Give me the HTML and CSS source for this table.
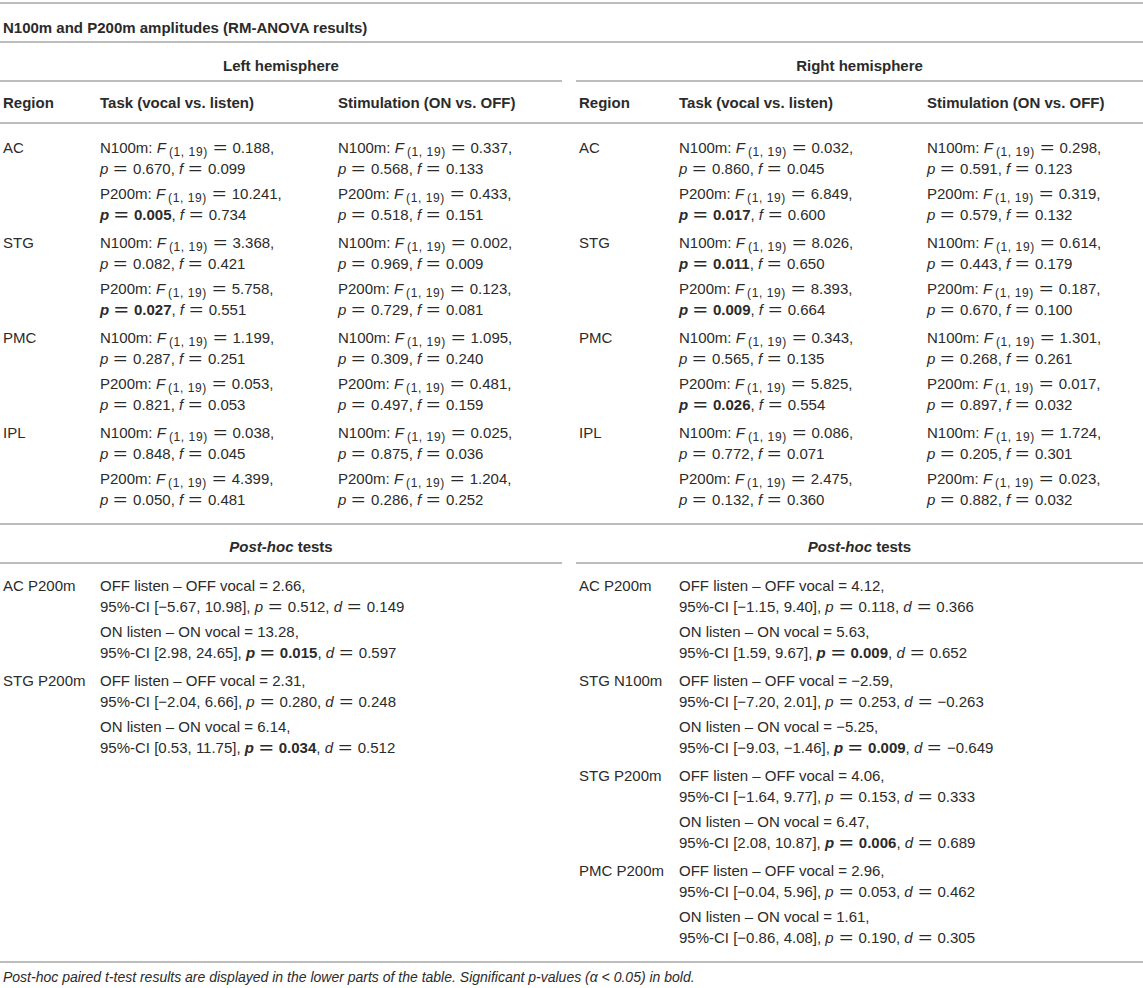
FILE: index.html
```html
<!DOCTYPE html>
<html lang="en">
<head>
    <meta charset="UTF-8">
    <meta name="viewport" content="width=device-width, initial-scale=1.0">
    <title>N100m and P200m amplitudes</title>
    <link rel="stylesheet" href="styles.css">
</head>
<body>
    <table class="results">
        <colgroup>
            <col class="c-region">
            <col class="c-task">
            <col class="c-stim">
            <col class="c-gap">
            <col class="c-region-r">
            <col class="c-task-r">
            <col class="c-stim-r">
        </colgroup>
        <thead>
            <tr class="title-row">
                <th colspan="7">N100m and P200m amplitudes (RM-ANOVA results)</th>
            </tr>
            <tr class="hemi-row">
                <th colspan="3">Left hemisphere</th>
                <th class="gap"></th>
                <th colspan="3">Right hemisphere</th>
            </tr>
            <tr class="col-row">
                <th>Region</th>
                <th>Task (vocal vs. listen)</th>
                <th>Stimulation (ON vs. OFF)</th>
                <th class="gap"></th>
                <th>Region</th>
                <th>Task (vocal vs. listen)</th>
                <th>Stimulation (ON vs. OFF)</th>
            </tr>
        </thead>
        <tbody class="anova">
            <tr>
                <td>AC</td>
                <td>
                    <div class="entry">N100m: <i>F</i><sub>(1, 19)</sub><span class="eq">=</span>0.188,<br><i>p</i><span class="eq">=</span>0.670, <i>f</i><span class="eq">=</span>0.099</div>
                    <div class="entry">P200m: <i>F</i><sub>(1, 19)</sub><span class="eq">=</span>10.241,<br><b><i>p</i><span class="eq">=</span>0.005</b>, <i>f</i><span class="eq">=</span>0.734</div>
                </td>
                <td>
                    <div class="entry">N100m: <i>F</i><sub>(1, 19)</sub><span class="eq">=</span>0.337,<br><i>p</i><span class="eq">=</span>0.568, <i>f</i><span class="eq">=</span>0.133</div>
                    <div class="entry">P200m: <i>F</i><sub>(1, 19)</sub><span class="eq">=</span>0.433,<br><i>p</i><span class="eq">=</span>0.518, <i>f</i><span class="eq">=</span>0.151</div>
                </td>
                <td class="gap"></td>
                <td>AC</td>
                <td>
                    <div class="entry">N100m: <i>F</i><sub>(1, 19)</sub><span class="eq">=</span>0.032,<br><i>p</i><span class="eq">=</span>0.860, <i>f</i><span class="eq">=</span>0.045</div>
                    <div class="entry">P200m: <i>F</i><sub>(1, 19)</sub><span class="eq">=</span>6.849,<br><b><i>p</i><span class="eq">=</span>0.017</b>, <i>f</i><span class="eq">=</span>0.600</div>
                </td>
                <td>
                    <div class="entry">N100m: <i>F</i><sub>(1, 19)</sub><span class="eq">=</span>0.298,<br><i>p</i><span class="eq">=</span>0.591, <i>f</i><span class="eq">=</span>0.123</div>
                    <div class="entry">P200m: <i>F</i><sub>(1, 19)</sub><span class="eq">=</span>0.319,<br><i>p</i><span class="eq">=</span>0.579, <i>f</i><span class="eq">=</span>0.132</div>
                </td>
            </tr>
            <tr>
                <td>STG</td>
                <td>
                    <div class="entry">N100m: <i>F</i><sub>(1, 19)</sub><span class="eq">=</span>3.368,<br><i>p</i><span class="eq">=</span>0.082, <i>f</i><span class="eq">=</span>0.421</div>
                    <div class="entry">P200m: <i>F</i><sub>(1, 19)</sub><span class="eq">=</span>5.758,<br><b><i>p</i><span class="eq">=</span>0.027</b>, <i>f</i><span class="eq">=</span>0.551</div>
                </td>
                <td>
                    <div class="entry">N100m: <i>F</i><sub>(1, 19)</sub><span class="eq">=</span>0.002,<br><i>p</i><span class="eq">=</span>0.969, <i>f</i><span class="eq">=</span>0.009</div>
                    <div class="entry">P200m: <i>F</i><sub>(1, 19)</sub><span class="eq">=</span>0.123,<br><i>p</i><span class="eq">=</span>0.729, <i>f</i><span class="eq">=</span>0.081</div>
                </td>
                <td class="gap"></td>
                <td>STG</td>
                <td>
                    <div class="entry">N100m: <i>F</i><sub>(1, 19)</sub><span class="eq">=</span>8.026,<br><b><i>p</i><span class="eq">=</span>0.011</b>, <i>f</i><span class="eq">=</span>0.650</div>
                    <div class="entry">P200m: <i>F</i><sub>(1, 19)</sub><span class="eq">=</span>8.393,<br><b><i>p</i><span class="eq">=</span>0.009</b>, <i>f</i><span class="eq">=</span>0.664</div>
                </td>
                <td>
                    <div class="entry">N100m: <i>F</i><sub>(1, 19)</sub><span class="eq">=</span>0.614,<br><i>p</i><span class="eq">=</span>0.443, <i>f</i><span class="eq">=</span>0.179</div>
                    <div class="entry">P200m: <i>F</i><sub>(1, 19)</sub><span class="eq">=</span>0.187,<br><i>p</i><span class="eq">=</span>0.670, <i>f</i><span class="eq">=</span>0.100</div>
                </td>
            </tr>
            <tr>
                <td>PMC</td>
                <td>
                    <div class="entry">N100m: <i>F</i><sub>(1, 19)</sub><span class="eq">=</span>1.199,<br><i>p</i><span class="eq">=</span>0.287, <i>f</i><span class="eq">=</span>0.251</div>
                    <div class="entry">P200m: <i>F</i><sub>(1, 19)</sub><span class="eq">=</span>0.053,<br><i>p</i><span class="eq">=</span>0.821, <i>f</i><span class="eq">=</span>0.053</div>
                </td>
                <td>
                    <div class="entry">N100m: <i>F</i><sub>(1, 19)</sub><span class="eq">=</span>1.095,<br><i>p</i><span class="eq">=</span>0.309, <i>f</i><span class="eq">=</span>0.240</div>
                    <div class="entry">P200m: <i>F</i><sub>(1, 19)</sub><span class="eq">=</span>0.481,<br><i>p</i><span class="eq">=</span>0.497, <i>f</i><span class="eq">=</span>0.159</div>
                </td>
                <td class="gap"></td>
                <td>PMC</td>
                <td>
                    <div class="entry">N100m: <i>F</i><sub>(1, 19)</sub><span class="eq">=</span>0.343,<br><i>p</i><span class="eq">=</span>0.565, <i>f</i><span class="eq">=</span>0.135</div>
                    <div class="entry">P200m: <i>F</i><sub>(1, 19)</sub><span class="eq">=</span>5.825,<br><b><i>p</i><span class="eq">=</span>0.026</b>, <i>f</i><span class="eq">=</span>0.554</div>
                </td>
                <td>
                    <div class="entry">N100m: <i>F</i><sub>(1, 19)</sub><span class="eq">=</span>1.301,<br><i>p</i><span class="eq">=</span>0.268, <i>f</i><span class="eq">=</span>0.261</div>
                    <div class="entry">P200m: <i>F</i><sub>(1, 19)</sub><span class="eq">=</span>0.017,<br><i>p</i><span class="eq">=</span>0.897, <i>f</i><span class="eq">=</span>0.032</div>
                </td>
            </tr>
            <tr>
                <td>IPL</td>
                <td>
                    <div class="entry">N100m: <i>F</i><sub>(1, 19)</sub><span class="eq">=</span>0.038,<br><i>p</i><span class="eq">=</span>0.848, <i>f</i><span class="eq">=</span>0.045</div>
                    <div class="entry">P200m: <i>F</i><sub>(1, 19)</sub><span class="eq">=</span>4.399,<br><i>p</i><span class="eq">=</span>0.050, <i>f</i><span class="eq">=</span>0.481</div>
                </td>
                <td>
                    <div class="entry">N100m: <i>F</i><sub>(1, 19)</sub><span class="eq">=</span>0.025,<br><i>p</i><span class="eq">=</span>0.875, <i>f</i><span class="eq">=</span>0.036</div>
                    <div class="entry">P200m: <i>F</i><sub>(1, 19)</sub><span class="eq">=</span>1.204,<br><i>p</i><span class="eq">=</span>0.286, <i>f</i><span class="eq">=</span>0.252</div>
                </td>
                <td class="gap"></td>
                <td>IPL</td>
                <td>
                    <div class="entry">N100m: <i>F</i><sub>(1, 19)</sub><span class="eq">=</span>0.086,<br><i>p</i><span class="eq">=</span>0.772, <i>f</i><span class="eq">=</span>0.071</div>
                    <div class="entry">P200m: <i>F</i><sub>(1, 19)</sub><span class="eq">=</span>2.475,<br><i>p</i><span class="eq">=</span>0.132, <i>f</i><span class="eq">=</span>0.360</div>
                </td>
                <td>
                    <div class="entry">N100m: <i>F</i><sub>(1, 19)</sub><span class="eq">=</span>1.724,<br><i>p</i><span class="eq">=</span>0.205, <i>f</i><span class="eq">=</span>0.301</div>
                    <div class="entry">P200m: <i>F</i><sub>(1, 19)</sub><span class="eq">=</span>0.023,<br><i>p</i><span class="eq">=</span>0.882, <i>f</i><span class="eq">=</span>0.032</div>
                </td>
            </tr>
        </tbody>
        <tbody class="posthoc">
            <tr class="hemi-row">
                <th colspan="3"><i>Post-hoc</i> tests</th>
                <th class="gap"></th>
                <th colspan="3"><i>Post-hoc</i> tests</th>
            </tr>
            <tr>
                <td>AC P200m</td>
                <td colspan="2">
                    <div class="entry">OFF listen – OFF vocal = 2.66,<br>95%-CI [−5.67, 10.98], <i>p</i><span class="eq">=</span>0.512, <i>d</i><span class="eq">=</span>0.149</div>
                    <div class="entry">ON listen – ON vocal = 13.28,<br>95%-CI [2.98, 24.65], <b><i>p</i><span class="eq">=</span>0.015</b>, <i>d</i><span class="eq">=</span>0.597</div>
                </td>
                <td class="gap"></td>
                <td>AC P200m</td>
                <td colspan="2">
                    <div class="entry">OFF listen – OFF vocal = 4.12,<br>95%-CI [−1.15, 9.40], <i>p</i><span class="eq">=</span>0.118, <i>d</i><span class="eq">=</span>0.366</div>
                    <div class="entry">ON listen – ON vocal = 5.63,<br>95%-CI [1.59, 9.67], <b><i>p</i><span class="eq">=</span>0.009</b>, <i>d</i><span class="eq">=</span>0.652</div>
                </td>
            </tr>
            <tr>
                <td>STG P200m</td>
                <td colspan="2">
                    <div class="entry">OFF listen – OFF vocal = 2.31,<br>95%-CI [−2.04, 6.66], <i>p</i><span class="eq">=</span>0.280, <i>d</i><span class="eq">=</span>0.248</div>
                    <div class="entry">ON listen – ON vocal = 6.14,<br>95%-CI [0.53, 11.75], <b><i>p</i><span class="eq">=</span>0.034</b>, <i>d</i><span class="eq">=</span>0.512</div>
                </td>
                <td class="gap"></td>
                <td>STG N100m</td>
                <td colspan="2">
                    <div class="entry">OFF listen – OFF vocal = −2.59,<br>95%-CI [−7.20, 2.01], <i>p</i><span class="eq">=</span>0.253, <i>d</i><span class="eq">=</span>−0.263</div>
                    <div class="entry">ON listen – ON vocal = −5.25,<br>95%-CI [−9.03, −1.46], <b><i>p</i><span class="eq">=</span>0.009</b>, <i>d</i><span class="eq">=</span>−0.649</div>
                </td>
            </tr>
            <tr>
                <td></td>
                <td colspan="2"></td>
                <td class="gap"></td>
                <td>STG P200m</td>
                <td colspan="2">
                    <div class="entry">OFF listen – OFF vocal = 4.06,<br>95%-CI [−1.64, 9.77], <i>p</i><span class="eq">=</span>0.153, <i>d</i><span class="eq">=</span>0.333</div>
                    <div class="entry">ON listen – ON vocal = 6.47,<br>95%-CI [2.08, 10.87], <b><i>p</i><span class="eq">=</span>0.006</b>, <i>d</i><span class="eq">=</span>0.689</div>
                </td>
            </tr>
            <tr>
                <td></td>
                <td colspan="2"></td>
                <td class="gap"></td>
                <td>PMC P200m</td>
                <td colspan="2">
                    <div class="entry">OFF listen – OFF vocal = 2.96,<br>95%-CI [−0.04, 5.96], <i>p</i><span class="eq">=</span>0.053, <i>d</i><span class="eq">=</span>0.462</div>
                    <div class="entry">ON listen – ON vocal = 1.61,<br>95%-CI [−0.86, 4.08], <i>p</i><span class="eq">=</span>0.190, <i>d</i><span class="eq">=</span>0.305</div>
                </td>
            </tr>
        </tbody>
    </table>
    <p class="note"><i>Post-hoc</i> paired t-test results are displayed in the lower parts of the table. Significant p-values (α &lt; 0.05) in bold.</p>
</body>
</html>
```

FILE: styles.css
```css
* {
    margin: 0;
    padding: 0;
    box-sizing: border-box;
}
body {
    background-color: #fff;
    color: #2b2b2b;
    font-family: "Liberation Sans", Arial, sans-serif;
    font-size: 15px;
    line-height: 21px;
    padding-top: 2px;
}
.results {
    width: 1143px;
    table-layout: fixed;
    border-collapse: collapse;
    border-top: 2px solid #bdbdbd;
}
.c-region { width: 97px; }
.c-task { width: 238px; }
.c-stim { width: 227px; }
.c-gap { width: 14px; }
.c-region-r { width: 100px; }
.c-task-r { width: 248px; }
.c-stim-r { width: 219px; }

th, td {
    text-align: left;
    vertical-align: top;
    padding: 4px 3px 3px;
    font-weight: normal;
}
th {
    font-weight: bold;
}
.title-row th {
    padding: 13px 3px 3px;
    border-bottom: 2px solid #bdbdbd;
}
.hemi-row th {
    text-align: center;
    padding: 12px 3px 4px;
    border-bottom: 2px solid #bdbdbd;
}
.hemi-row th.gap {
    border-bottom: none;
}
.col-row th {
    padding: 10px 3px 9px;
    border-bottom: 2px solid #bdbdbd;
}
.anova tr:first-child td {
    padding-top: 13px;
}
.anova tr:last-child td,
.posthoc tr:last-child td {
    padding-bottom: 13px;
    border-bottom: 2px solid #bdbdbd;
}
.posthoc .hemi-row th {
    padding: 11px 3px 5px;
}
.posthoc tr:nth-child(2) td {
    padding-top: 11px;
}
.entry + .entry {
    margin-top: 4px;
}
/* math-style equals sign: wider than the text glyph */
.eq {
    display: inline-block;
    margin: 0 8px;
    transform: scaleX(1.6);
}
sub {
    font-size: 12px;
    line-height: 0;
    vertical-align: -3px;
    margin-left: 3px;
    letter-spacing: 0.6px;
}
.note {
    font-size: 14px;
    font-style: italic;
    line-height: 17px;
    padding: 6px 3px 0;
}
```
